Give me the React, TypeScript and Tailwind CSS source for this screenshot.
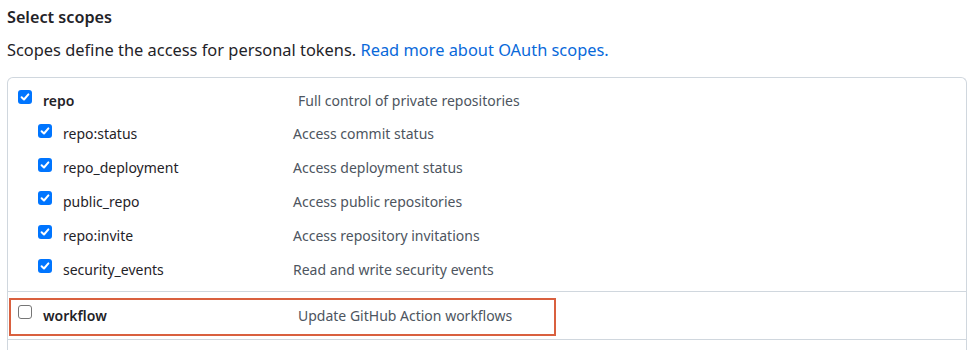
import React from "react";

type Scope = { name: string; desc: string };

const children: Scope[] = [
  { name: "repo:status", desc: "Access commit status" },
  { name: "repo_deployment", desc: "Access deployment status" },
  { name: "public_repo", desc: "Access public repositories" },
  { name: "repo:invite", desc: "Access repository invitations" },
  { name: "security_events", desc: "Read and write security events" },
];

function Box({ checked }: { checked: boolean }) {
  if (!checked) {
    return (
      <span className="mb-[6px] block h-[14px] w-[14px] shrink-0 rounded-[3px] border border-[#767676] bg-white" />
    );
  }
  return (
    <span className="mb-[6px] flex h-[14px] w-[14px] shrink-0 items-center justify-center rounded-[3px] bg-[#0075ff]">
      <svg width="10" height="10" viewBox="0 0 10 10" fill="none">
        <path d="M1.6 5.2 L4 7.5 L8.4 2.4" stroke="white" strokeWidth="2" strokeLinecap="round" strokeLinejoin="round" />
      </svg>
    </span>
  );
}

export default function App() {
  return (
    <div className="h-[350px] w-[979px] overflow-hidden bg-white pl-[7px] text-[#1f2328] font-['Noto_Sans',sans-serif]">
      <h3 className="pt-[5px] text-[16.2px] leading-[24px] font-semibold">Select scopes</h3>
      <p className="mt-[10px] text-[16.4px] leading-[22px]">
        Scopes define the access for personal tokens.{" "}
        <a className="text-[#0969da]">Read more about OAuth scopes.</a>
      </p>

      <div className="mt-[16px] mr-[12px] rounded-t-[6px] border border-b-0 border-[#d0d7de]">
        <div className="pt-[5px] pb-[5px] text-[14px]">
          <div className="flex h-[34px] items-center pl-[10px]">
            <Box checked />
            <span className="ml-[11px] w-[255px] font-semibold">repo</span>
            <span className="text-[#4d5560]">Full control of private repositories</span>
          </div>
          {children.map((s) => (
            <div key={s.name} className="flex h-[33.8px] items-center pl-[30px]">
              <Box checked />
              <span className="ml-[11px] w-[230px]">{s.name}</span>
              <span className="text-[#4d5560]">{s.desc}</span>
            </div>
          ))}
        </div>
        <div className="relative flex h-[48px] items-center border-t border-[#d0d7de] pl-[10px] text-[14px]">
          <Box checked={false} />
          <span className="ml-[11px] w-[255px] font-semibold">workflow</span>
          <span className="text-[#4d5560]">Update GitHub Action workflows</span>
          <div className="absolute top-[6px] left-[1px] h-[38px] w-[547px] border-2 border-[#d9603f]" />
        </div>
        <div className="h-[20px] border-t border-[#d0d7de]" />
      </div>
    </div>
  );
}
